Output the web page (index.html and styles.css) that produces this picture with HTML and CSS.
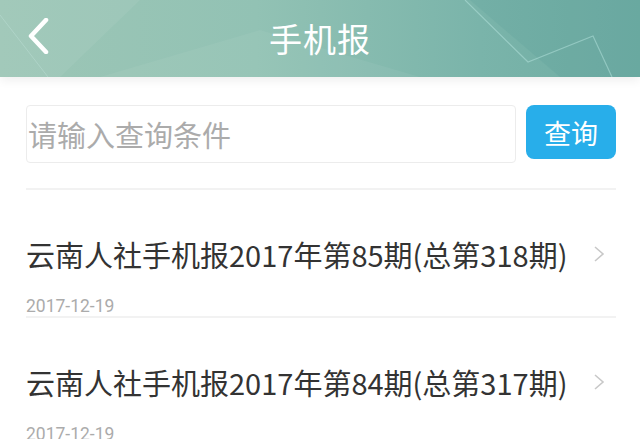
FILE: index.html
```html
<!DOCTYPE html>
<html lang="zh-CN">
<head>
  <meta charset="UTF-8" />
  <title>手机报</title>
  <link rel="stylesheet" href="styles.css">
</head>
<body>
  <!-- Header -->
  <div class="header">
    <svg class="header-bg" width="640" height="77" viewBox="0 0 640 77">
      <polygon points="0,0 140,0 60,77 0,77" fill="#ffffff" opacity="0.06" />
      <polygon points="100,77 260,30 420,77" fill="#ffffff" opacity="0.05" />
      <polygon points="470,0 640,0 640,77 560,77" fill="#3f8f88" opacity="0.12" />
      <polyline points="465,0 528,62 593,36 612,77" fill="none" stroke="#b8e6e0" stroke-width="1.2" opacity="0.5" />
      <line x1="0" y1="15" x2="48" y2="77" stroke="#cfeee8" stroke-width="1" opacity="0.3" />
    </svg>
    <a class="back" href="#">
      <svg width="22" height="36" viewBox="0 0 22 36">
        <polyline points="19,2 4,18 19,34" fill="none" stroke="#ffffff" stroke-width="4.5" stroke-linecap="round" stroke-linejoin="round" />
      </svg>
    </a>
    <h1>手机报</h1>
  </div>

  <!-- Search -->
  <div class="search">
    <input class="search-input" placeholder="请输入查询条件" />
    <button class="search-btn">查询</button>
  </div>

  <!-- List -->
  <ul class="news-list">
    <li class="news-item">
      <div class="news-row">
        <span class="news-title">云南人社手机报2017年第85期(总第318期)</span>
        <svg class="arrow" width="14" height="18" viewBox="0 0 14 18">
          <polyline points="3,2 11,9 3,16" fill="none" stroke="#c8c8c8" stroke-width="1.6" />
        </svg>
      </div>
      <div class="news-date">2017-12-19</div>
    </li>
    <li class="news-item">
      <div class="news-row">
        <span class="news-title">云南人社手机报2017年第84期(总第317期)</span>
        <svg class="arrow" width="14" height="18" viewBox="0 0 14 18">
          <polyline points="3,2 11,9 3,16" fill="none" stroke="#c8c8c8" stroke-width="1.6" />
        </svg>
      </div>
      <div class="news-date">2017-12-19</div>
    </li>
  </ul>
</body>
</html>
```

FILE: styles.css
```css
body {
  margin: 0;
  background: #ffffff;
  font-family: 'Noto Sans CJK SC', 'Noto Sans', sans-serif;
  overflow: hidden;
}

.header {
  position: relative;
  height: 77px;
  background: linear-gradient(90deg, #9dc6b6 0%, #92c2b4 40%, #7ab4aa 75%, #6fada3 100%);
  box-shadow: 0 3px 10px rgba(0, 0, 0, 0.07);
  display: flex;
  align-items: center;
  justify-content: center;
  overflow: hidden;
}

.header-bg {
  position: absolute;
  left: 0;
  top: 0;
}

.back {
  position: absolute;
  left: 27px;
  top: 18px;
  display: block;
}

.header h1 {
  position: relative;
  margin: 0;
  color: #ffffff;
  font-size: 33px;
  font-weight: 400;
  letter-spacing: 1px;
  line-height: 1;
}

.search {
  display: flex;
  align-items: flex-start;
  gap: 10px;
  margin: 28px 24px 0 26px;
  padding-bottom: 25px;
  border-bottom: 2px solid #f2f2f2;
}

.search-input {
  flex: 1;
  height: 58px;
  box-sizing: border-box;
  border: 1px solid #ececec;
  border-radius: 4px;
  padding: 0 1px;
  font-family: inherit;
  font-size: 29px;
  color: #333;
  outline: none;
}

.search-input::placeholder {
  color: #ababab;
}

.search-btn {
  width: 90px;
  height: 54px;
  background-color: #28aeea;
  color: white;
  border: none;
  border-radius: 8px;
  font-family: inherit;
  font-size: 27px;
  padding: 0;
}

.news-list {
  list-style-type: none;
  margin: 0 24px 0 26px;
  padding: 0;
}

.news-item {
  padding-top: 46px;
  border-bottom: 2px solid #f2f2f2;
}

.news-row {
  display: flex;
  justify-content: space-between;
  align-items: center;
  height: 36px;
}

.news-title {
  font-size: 29px;
  color: #333;
  white-space: nowrap;
}

.arrow {
  margin-right: 10px;
}

.news-date {
  margin-top: 24px;
  height: 20px;
  line-height: 20px;
  font-size: 17.5px;
  color: #ababab;
  font-family: Roboto, 'Noto Sans', sans-serif;
}
```
